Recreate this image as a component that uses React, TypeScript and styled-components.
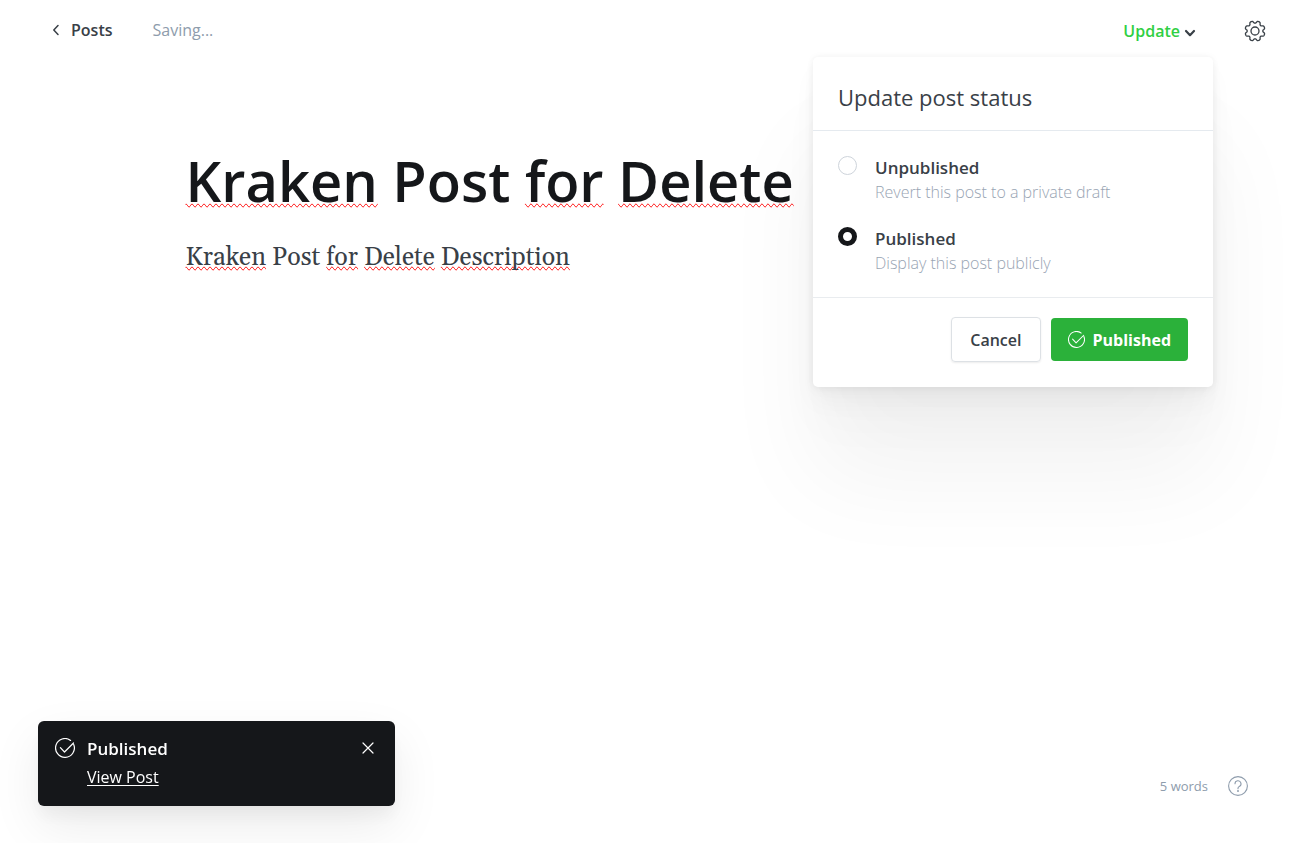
import React, { useState } from "react";
import styled, { createGlobalStyle, css } from "styled-components";

const ink = "#15171a";
const slate = "#394047";
const muted = "#8e9cac";
const pale = "#98a4b3";
const green = "#2bb13a";

const GlobalStyle = createGlobalStyle`
  *, *::before, *::after { box-sizing: border-box; }
  body {
    margin: 0;
    background: #fff;
    color: ${slate};
    font-family: "Segoe UI", "Open Sans", sans-serif;
    font-size: 16px;
    line-height: 24px;
  }
  button { font: inherit; color: inherit; background: none; border: 0; padding: 0; cursor: pointer; }
`;

const Page = styled.div`
  display: flex;
  flex-direction: column;
  min-height: 100vh;
`;

const Header = styled.header`
  display: flex;
  align-items: flex-start;
  justify-content: space-between;
  padding: 18px 29px 18px 52px;
`;

const HeaderGroup = styled.div<{ $gap: number }>`
  display: flex;
  align-items: center;
  gap: ${(p) => p.$gap}px;
`;

const Actions = styled(HeaderGroup)`
  padding-top: 1px;
`;

const BackLink = styled.a`
  display: flex;
  align-items: center;
  gap: 11px;
  color: ${slate};
  font-weight: 600;
  text-decoration: none;
`;

const SaveState = styled.span`
  color: ${muted};
`;

const UpdateMenu = styled.div`
  position: relative;
`;

const UpdateButton = styled.button`
  display: flex;
  align-items: center;
  gap: 4px;
  color: #30cf43;
  font-weight: 600;

  > svg { margin-top: 3px; }
`;

const IconButton = styled.button`
  display: flex;
`;

const Panel = styled.form`
  position: absolute;
  top: 38px;
  right: -17px;
  z-index: 2;
  width: 400px;
  background: #fff;
  border-radius: 5px;
  box-shadow:
    0 0 7px rgba(0, 0, 0, 0.05),
    0 4px 12px rgba(0, 0, 0, 0.03),
    0 16px 24px rgba(0, 0, 0, 0.03),
    0 40px 50px rgba(0, 0, 0, 0.02),
    0 90px 100px rgba(0, 0, 0, 0.05);
`;

const PanelTitle = styled.h2`
  margin: 0;
  padding: 24px 25px 17px;
  border-bottom: 1px solid #e5eaef;
  font-size: 22px;
  line-height: 32px;
  font-weight: 400;
`;

const Options = styled.fieldset`
  display: flex;
  flex-direction: column;
  gap: 23px;
  margin: 0;
  padding: 25px 25px 22px;
  border: 0;
`;

const Option = styled.label`
  display: flex;
  align-items: flex-start;
  gap: 18px;
  cursor: pointer;
`;

const Radio = styled.input`
  appearance: none;
  flex: none;
  width: 19px;
  height: 19px;
  margin: 0;
  border: 1px solid #ced4db;
  border-radius: 50%;
  background: #fff;

  &:checked {
    border: 5px solid ${ink};
  }
`;

const OptionText = styled.span`
  display: flex;
  flex-direction: column;
`;

const OptionName = styled.span`
  font-size: 17px;
  font-weight: 600;
`;

const OptionHint = styled.span`
  color: ${pale};
  font-weight: 300;
`;

const PanelFooter = styled.div`
  display: flex;
  align-items: center;
  justify-content: flex-end;
  gap: 10px;
  padding: 19px 25px 25px;
  border-top: 1px solid #e9ecef;
`;

const Button = styled.button<{ $primary?: boolean }>`
  display: flex;
  align-items: center;
  gap: 8px;
  height: 45px;
  padding: 0 18px;
  border: 1px solid #dde1e5;
  border-radius: 4px;
  font-weight: 600;
  box-shadow: 0 1px 2px rgba(0, 0, 0, 0.08);

  ${(p) =>
    p.$primary &&
    css`
      height: 43px;
      padding: 0 17px;
      border: 0;
      background: ${green};
      color: #fff;
      font-weight: 700;
      box-shadow: none;
    `}
`;

const Editor = styled.main`
  flex: 1;
  width: 100%;
  max-width: 972px;
  margin: 0 auto;
  padding: 79px 24px 0;
`;

const Title = styled.h1`
  margin: 0;
  color: ${ink};
  font-size: 56px;
  line-height: 80px;
  font-weight: 600;
  outline: 0;
`;

const Body = styled.p`
  margin: 20px 0 0;
  font-family: Georgia, Gelasio, "Liberation Serif", serif;
  font-size: 25px;
  line-height: 36px;
  outline: 0;
`;

const Misspelt = styled.span`
  text-decoration: spelling-error;
`;

const Footer = styled.footer`
  display: flex;
  align-items: center;
  justify-content: flex-end;
  gap: 20px;
  padding: 0 47px 45px;
  color: ${muted};
  font-size: 13px;
`;

const HelpLink = styled.a`
  display: flex;
  color: ${muted};
`;

const Toast = styled.aside`
  position: fixed;
  left: 38px;
  bottom: 37px;
  display: flex;
  align-items: flex-start;
  gap: 12px;
  width: 357px;
  padding: 16px 21px 17px 17px;
  border-radius: 6px;
  background: ${ink};
  color: #fff;
  box-shadow:
    0 3px 5px rgba(0, 0, 0, 0.02),
    0 12px 16px rgba(0, 0, 0, 0.04),
    0 20px 50px rgba(0, 0, 0, 0.08);

  > svg { margin-top: 1px; }
`;

const ToastText = styled.div`
  display: flex;
  flex: 1;
  flex-direction: column;
  align-items: flex-start;
  gap: 4px;
`;

const ToastTitle = styled.strong`
  font-size: 17px;
  font-weight: 600;
`;

const ToastLink = styled.a`
  color: #fff;
  text-underline-offset: 2px;
`;

const CloseButton = styled.button`
  display: flex;
  margin-top: 5px;
`;

const CheckCircle = ({ size }: { size: number }) => (
  <svg width={size} height={size} viewBox="0 0 20 20" fill="none" stroke="currentColor" strokeWidth="1.2" strokeLinecap="round" strokeLinejoin="round" aria-hidden="true">
    <path d="M15.6 2.4A9.4 9.4 0 1 0 18.7 6.4" />
    <path d="M5.4 9.6l4.1 4.4 9-9" />
  </svg>
);

/* Outline of a cog with eight rounded teeth, centred on 11,11. */
const gearPath =
  Array.from({ length: 144 }, (_, i) => {
    const a = (i / 144) * 2 * Math.PI;
    const r = 8.9 + 1.2 * Math.tanh(1.8 * Math.cos(8 * a - Math.PI) + 0.3);
    return `${i ? "L" : "M"}${(11 + r * Math.cos(a)).toFixed(2)} ${(11 + r * Math.sin(a)).toFixed(2)}`;
  }).join("") + "Z";

const Gear = () => (
  <svg width="22" height="22" viewBox="0 0 22 22" fill="none" stroke={slate} strokeWidth="1.3" strokeLinejoin="round" aria-hidden="true">
    <circle cx="11" cy="11" r="4" />
    <path d={gearPath} />
  </svg>
);

const options = [
  { id: "draft", name: "Unpublished", hint: "Revert this post to a private draft" },
  { id: "published", name: "Published", hint: "Display this post publicly" },
];

export default function App() {
  const [status, setStatus] = useState("published");

  return (
    <Page>
      <GlobalStyle />
      <Header>
        <HeaderGroup $gap={40}>
          <BackLink href="#posts">
            <svg width="8" height="12" viewBox="0 0 8 12" fill="none" stroke="currentColor" strokeWidth="1.5" strokeLinecap="round" strokeLinejoin="round" aria-hidden="true">
              <path d="M6 1.5L1.8 6L6 10.5" />
            </svg>
            Posts
          </BackLink>
          <SaveState>Saving...</SaveState>
        </HeaderGroup>
        <Actions $gap={48}>
          <UpdateMenu>
            <UpdateButton type="button" aria-expanded="true">
              Update
              <svg width="12" height="8" viewBox="0 0 12 8" fill="none" stroke={slate} strokeWidth="2.2" strokeLinecap="round" strokeLinejoin="round" aria-hidden="true">
                <path d="M2 2L6 6.2L10 2" />
              </svg>
            </UpdateButton>
            <Panel onSubmit={(e) => e.preventDefault()}>
              <PanelTitle>Update post status</PanelTitle>
              <Options aria-label="Post status">
                {options.map((o) => (
                  <Option key={o.id}>
                    <Radio type="radio" name="status" value={o.id} checked={status === o.id} onChange={() => setStatus(o.id)} />
                    <OptionText>
                      <OptionName>{o.name}</OptionName>
                      <OptionHint>{o.hint}</OptionHint>
                    </OptionText>
                  </Option>
                ))}
              </Options>
              <PanelFooter>
                <Button type="button">Cancel</Button>
                <Button type="submit" $primary>
                  <CheckCircle size={17} />
                  Published
                </Button>
              </PanelFooter>
            </Panel>
          </UpdateMenu>
          <IconButton type="button" aria-label="Settings">
            <Gear />
          </IconButton>
        </Actions>
      </Header>

      <Editor>
        <Title contentEditable suppressContentEditableWarning spellCheck={false}>
          <Misspelt>Kraken</Misspelt> Post <Misspelt>for</Misspelt> <Misspelt>Delete</Misspelt>
        </Title>
        <Body contentEditable suppressContentEditableWarning spellCheck={false}>
          <Misspelt>Kraken</Misspelt> Post <Misspelt>for</Misspelt> <Misspelt>Delete</Misspelt> <Misspelt>Description</Misspelt>
        </Body>
      </Editor>

      <Footer>
        <span>5 words</span>
        <HelpLink href="#help" aria-label="Help">
          <svg width="20" height="20" viewBox="0 0 20 20" fill="none" stroke="currentColor" strokeWidth="1.1" strokeLinecap="round" strokeLinejoin="round" aria-hidden="true">
            <circle cx="10" cy="10" r="9.4" />
            <path d="M7 7.8a3 3 0 1 1 4.3 2.7c-.8.4-1.3.9-1.3 1.8v.5" />
            <circle cx="10" cy="15" r=".4" fill="currentColor" />
          </svg>
        </HelpLink>
      </Footer>

      <Toast role="status">
        <CheckCircle size={20} />
        <ToastText>
          <ToastTitle>Published</ToastTitle>
          <ToastLink href="#post">View Post</ToastLink>
        </ToastText>
        <CloseButton type="button" aria-label="Close">
          <svg width="12" height="12" viewBox="0 0 12 12" fill="none" stroke="currentColor" strokeWidth="1.2" strokeLinecap="round" aria-hidden="true">
            <path d="M1 1l10 10M11 1L1 11" />
          </svg>
        </CloseButton>
      </Toast>
    </Page>
  );
}
